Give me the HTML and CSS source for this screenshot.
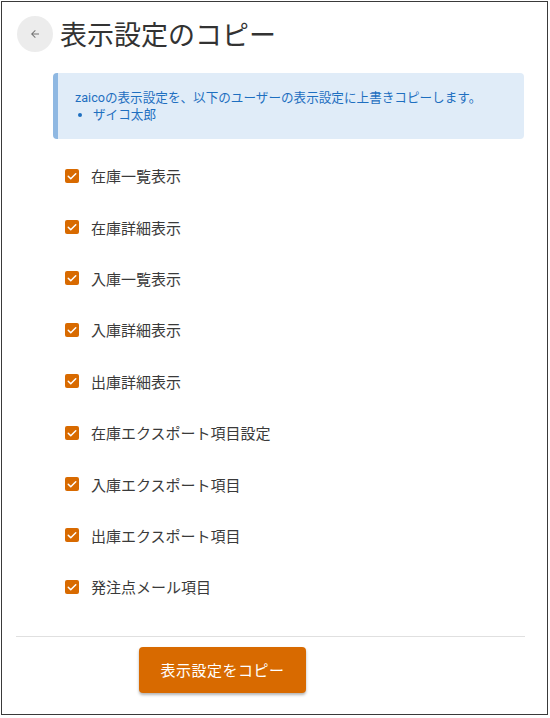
FILE: index.html
```html
<!DOCTYPE html>
<html lang="ja">
<head>
<meta charset="utf-8">
<link rel="stylesheet" href="styles.css">
</head>
<body>
<div class="frame">
  <header class="header">
    <button class="back" aria-label="戻る">
      <svg width="12" height="12" viewBox="0 0 24 24"><path d="M20 11H7.83l5.59-5.59L12 4l-8 8 8 8 1.41-1.41L7.83 13H20v-2z" fill="#757575"/></svg>
    </button>
    <h1 class="title">表示設定のコピー</h1>
  </header>
  <div class="info">
    <p class="info-text">zaicoの表示設定を、以下のユーザーの表示設定に上書きコピーします。</p>
    <ul class="info-list"><li>ザイコ太郎</li></ul>
  </div>
  <ul class="checks">
    <li class="check"><span class="box"><svg width="12" height="12" viewBox="0 0 24 24"><path d="M4.5 12.5l5 5 10-10" stroke="#fff" stroke-width="3" fill="none" stroke-linecap="round" stroke-linejoin="round"/></svg></span>在庫一覧表示</li>
    <li class="check"><span class="box"><svg width="12" height="12" viewBox="0 0 24 24"><path d="M4.5 12.5l5 5 10-10" stroke="#fff" stroke-width="3" fill="none" stroke-linecap="round" stroke-linejoin="round"/></svg></span>在庫詳細表示</li>
    <li class="check"><span class="box"><svg width="12" height="12" viewBox="0 0 24 24"><path d="M4.5 12.5l5 5 10-10" stroke="#fff" stroke-width="3" fill="none" stroke-linecap="round" stroke-linejoin="round"/></svg></span>入庫一覧表示</li>
    <li class="check"><span class="box"><svg width="12" height="12" viewBox="0 0 24 24"><path d="M4.5 12.5l5 5 10-10" stroke="#fff" stroke-width="3" fill="none" stroke-linecap="round" stroke-linejoin="round"/></svg></span>入庫詳細表示</li>
    <li class="check"><span class="box"><svg width="12" height="12" viewBox="0 0 24 24"><path d="M4.5 12.5l5 5 10-10" stroke="#fff" stroke-width="3" fill="none" stroke-linecap="round" stroke-linejoin="round"/></svg></span>出庫詳細表示</li>
    <li class="check"><span class="box"><svg width="12" height="12" viewBox="0 0 24 24"><path d="M4.5 12.5l5 5 10-10" stroke="#fff" stroke-width="3" fill="none" stroke-linecap="round" stroke-linejoin="round"/></svg></span>在庫エクスポート項目設定</li>
    <li class="check"><span class="box"><svg width="12" height="12" viewBox="0 0 24 24"><path d="M4.5 12.5l5 5 10-10" stroke="#fff" stroke-width="3" fill="none" stroke-linecap="round" stroke-linejoin="round"/></svg></span>入庫エクスポート項目</li>
    <li class="check"><span class="box"><svg width="12" height="12" viewBox="0 0 24 24"><path d="M4.5 12.5l5 5 10-10" stroke="#fff" stroke-width="3" fill="none" stroke-linecap="round" stroke-linejoin="round"/></svg></span>出庫エクスポート項目</li>
    <li class="check"><span class="box"><svg width="12" height="12" viewBox="0 0 24 24"><path d="M4.5 12.5l5 5 10-10" stroke="#fff" stroke-width="3" fill="none" stroke-linecap="round" stroke-linejoin="round"/></svg></span>発注点メール項目</li>
  </ul>
  <hr class="divider">
  <div class="actions">
    <button class="copy">表示設定をコピー</button>
  </div>
</div>
</body>
</html>
```

FILE: styles.css
```css
* { box-sizing: border-box; }
html, body { margin: 0; padding: 0; background: #fff; }
body {
  font-family: Roboto, "Noto Sans CJK JP", sans-serif;
  color: #333;
}
.frame {
  margin: 1px 0 0 1px;
  width: 547px;
  height: 714px;
  border: 1px solid #3a3a3a;
  background: #fff;
}
.header {
  display: flex;
  align-items: center;
  gap: 7px;
  padding: 13px 0 0 15px;
  height: 50px;
}
.back {
  width: 36px;
  height: 36px;
  border-radius: 50%;
  border: none;
  background: #ececec;
  display: flex;
  align-items: center;
  justify-content: center;
  padding: 0;
}
.title {
  margin: 0;
  font-size: 27px;
  font-weight: 400;
  color: #333;
  line-height: 36px;
  font-family: "Noto Sans CJK JP", sans-serif;
}
.info {
  margin: 21px 0 0 51px;
  width: 471px;
  height: 66px;
  background: #e0ecf8;
  border-left: 5px solid #8fb8e2;
  border-radius: 4px;
  padding: 16px 17px 0;
  color: #1e6fc0;
  font-size: 12.6px;
  line-height: 17px;
}
.info-text { margin: 0; }
.info-list {
  margin: 0;
  padding-left: 18px;
}
.checks {
  list-style: none;
  margin: 11px 0 0 0;
  padding: 0 0 0 63px;
}
.check {
  height: 51.4px;
  display: flex;
  align-items: center;
  gap: 12px;
  font-size: 15px;
  color: #3a3a3a;
  font-family: "Noto Sans CJK JP", sans-serif;
}
.box {
  width: 14px;
  height: 14px;
  border-radius: 2px;
  background: #d86a00;
  display: flex;
  align-items: center;
  justify-content: center;
}
.divider {
  margin: 23px 22px 0 14px;
  border: none;
  border-top: 1px solid #e0e0e0;
  height: 0;
}
.actions {
  padding: 10px 0 0 137px;
}
.copy {
  width: 167px;
  height: 46px;
  border: none;
  border-radius: 4px;
  background: #d86a00;
  color: #fff;
  font-size: 15px;
  font-family: "Noto Sans CJK JP", sans-serif;
  letter-spacing: 0.5px;
  box-shadow: 0 2px 3px rgba(0,0,0,0.3);
}
```
